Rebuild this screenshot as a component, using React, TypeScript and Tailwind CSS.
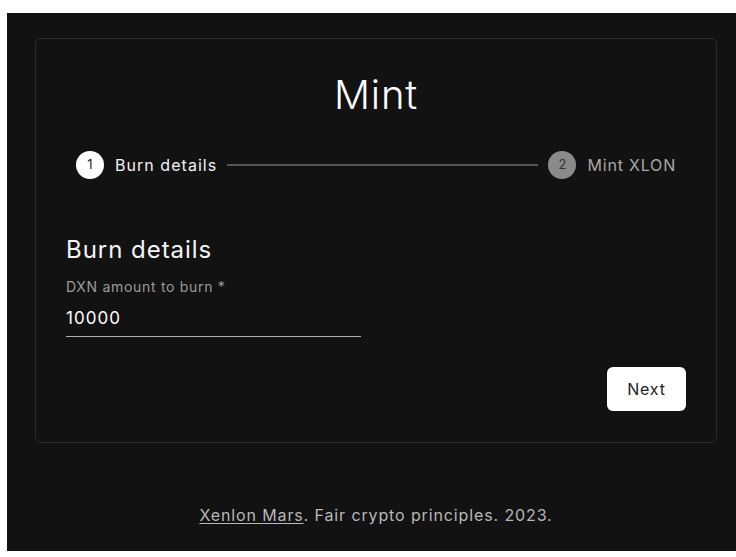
const font = { fontFamily: 'Inter, "Open Sans", sans-serif' };

function StepIcon({ n, active }: { n: number; active: boolean }) {
  return (
    <div
      className={
        'flex h-[28px] w-[28px] shrink-0 items-center justify-center rounded-full text-[13px] ' +
        (active ? 'bg-white text-[#222]' : 'bg-[#8a8a8a] text-[#333]')
      }
    >
      {n}
    </div>
  );
}

export default function App() {
  return (
    <div className="bg-white pl-[7px] pt-[13px] pb-[6px]" style={font}>
      <div className="flex h-[538px] flex-col bg-[#121212] pl-[28px] pr-[19px] pt-[25px]">
        {/* Card */}
        <div className="h-[405px] rounded-[5px] border border-[#2c2c2c] bg-[#121212] px-[30px]">
          <h1 className="pt-[32px] text-center text-[40px] font-light leading-[48px] tracking-[0.02em] text-white">
            Mint
          </h1>

          {/* Stepper */}
          <div className="mt-[32px] flex items-center px-[10px]">
            <StepIcon n={1} active />
            <span className="ml-[11px] text-[16px] tracking-[0.065em] text-[#f2f2f2]">Burn details</span>
            <div className="mx-[10px] h-[2px] flex-1 bg-[#555]" />
            <StepIcon n={2} active={false} />
            <span className="ml-[11px] text-[16px] tracking-[0.05em] text-[#a8a8a8]">Mint XLON</span>
          </div>

          {/* Form */}
          <h2 className="mt-[56px] text-[24px] leading-[30px] tracking-[0.04em] text-[#f5f5f5]">Burn details</h2>
          <div className="mt-[14px] w-[295px]">
            <label className="block text-[14px] leading-[16px] tracking-[0.05em] text-[#9a9a9a]">
              DXN amount to burn *
            </label>
            <div className="border-b border-[#b0b0b0] pt-[12px] pb-[7px] text-[17px] leading-[22px] tracking-[0.06em] text-white">
              10000
            </div>
          </div>

          <div className="mt-[30px] flex justify-end">
            <button className="h-[44px] w-[79px] rounded-[6px] bg-white text-[16px] tracking-[0.05em] text-[#222]">
              Next
            </button>
          </div>
        </div>

        {/* Footer */}
        <p className="mt-[60px] text-center text-[16px] tracking-[0.055em] text-[#b8b8b8]">
          <a className="underline underline-offset-2">Xenlon Mars</a>. Fair crypto principles. 2023.
        </p>
      </div>
    </div>
  );
}
